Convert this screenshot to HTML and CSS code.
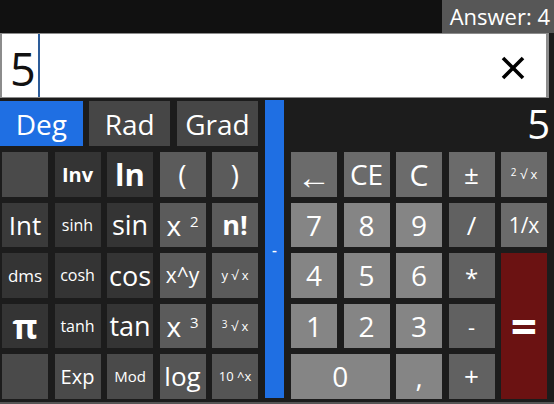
FILE: index.html
```html
<!DOCTYPE html>
<html>
<head>
<meta charset="utf-8">
<link rel="stylesheet" href="styles.css">
</head>
<body>
<div class="app">
  <div class="topbar"><div class="answer">Answer: 4</div></div>
  <div class="input">
    <span class="val">5</span><span class="caret"></span>
    <span class="clear"><svg width="26" height="24" viewBox="0 0 26 24"><path d="M3 2 L23 22 M23 2 L3 22" stroke="#000" stroke-width="3.6" fill="none"/></svg></span>
  </div>
  <div class="main">
    <div class="left">
      <div class="modes">
        <div class="mode active">Deg</div>
        <div class="mode">Rad</div>
        <div class="mode">Grad</div>
      </div>
      <div class="grid">
        <div class="key m"></div>
        <div class="key d b s20">Inv</div>
        <div class="key d b s31">ln</div>
        <div class="key l s28">(</div>
        <div class="key l s28">)</div>

        <div class="key d2 sb s26">Int</div>
        <div class="key d s16">sinh</div>
        <div class="key d sb s27">sin</div>
        <div class="key l sb s28">x<sup class="sup">2</sup></div>
        <div class="key l b s27">n!</div>

        <div class="key d s17">dms</div>
        <div class="key d s16">cosh</div>
        <div class="key d sb s27">cos</div>
        <div class="key l s21">x^y</div>
        <div class="key l s13">y √ x</div>

        <div class="key d b s34">π</div>
        <div class="key d s16">tanh</div>
        <div class="key d sb s27">tan</div>
        <div class="key l sb s28">x<sup class="sup">3</sup></div>
        <div class="key l s13"><sup class="sup2">3</sup>&nbsp;√ x</div>

        <div class="key m"></div>
        <div class="key m s20">Exp</div>
        <div class="key m s15">Mod</div>
        <div class="key l2 sb s26">log</div>
        <div class="key l2 s13">10 ^x</div>
      </div>
    </div>
    <div class="bar">-</div>
    <div class="right">
      <div class="display">5</div>
      <div class="grid">
        <div class="key f s34 arrow">←</div>
        <div class="key f sb s28">CE</div>
        <div class="key f sb s30">C</div>
        <div class="key f s26">±</div>
        <div class="key f s13"><sup class="sup2">2</sup>&nbsp;√ x</div>

        <div class="key n s28">7</div>
        <div class="key n s28">8</div>
        <div class="key n s28">9</div>
        <div class="key o s26">/</div>
        <div class="key f s21">1/x</div>

        <div class="key n s28">4</div>
        <div class="key n s28">5</div>
        <div class="key n s28">6</div>
        <div class="key o s24 up">*</div>
        <div class="key eq">=</div>

        <div class="key n s28">1</div>
        <div class="key n s28">2</div>
        <div class="key n s28">3</div>
        <div class="key o s22">-</div>

        <div class="key n s28 zero">0</div>
        <div class="key n s28">,</div>
        <div class="key o s26">+</div>
      </div>
    </div>
  </div>
  <div class="bottomline"></div>
</div>
</body>
</html>
```

FILE: styles.css
```css
html, body {
  margin: 0;
  padding: 0;
}
body {
  width: 554px;
  height: 404px;
  overflow: hidden;
  background: #1c1c1c;
  font-family: "Open Sans", "Noto Sans", sans-serif;
  color: #fff;
}
.app {
  width: 554px;
  height: 404px;
  display: flex;
  flex-direction: column;
}
.topbar {
  height: 33px;
  background: #111;
  display: flex;
  justify-content: flex-end;
}
.answer {
  width: 112px;
  height: 33px;
  background: #575757;
  font-size: 22px;
  line-height: 33px;
  text-align: right;
  padding-right: 4px;
  box-sizing: border-box;
}
.input {
  width: 549px;
  height: 65px;
  box-sizing: border-box;
  background: #fff;
  border: 2px solid #8c8c8c;
  border-top-width: 1px;
  border-right-width: 3px;
  border-bottom-width: 1px;
  display: flex;
  align-items: center;
}
.val {
  color: #111;
  font-size: 45px;
  line-height: 1;
  margin-left: 8px;
  margin-top: 6px;
}
.caret {
  align-self: stretch;
  width: 2px;
  background: #2d5d9a;
  margin-left: 2px;
}
.clear {
  margin-left: auto;
  margin-right: 20px;
  display: flex;
  margin-top: 4px;
}
.main {
  display: flex;
  height: 300px;
  padding-top: 2px;
}
.left {
  width: 258px;
  display: flex;
  flex-direction: column;
  gap: 6px;
  padding-top: 1px;
}
.modes {
  display: flex;
  gap: 6.5px;
  height: 45px;
}
.mode {
  width: 81.5px;
  background: #464646;
  font-size: 28px;
  display: flex;
  align-items: center;
  justify-content: center;
}
.mode.active {
  width: 83px;
  background: #1f6fe3;
}
.grid {
  display: grid;
  grid-template-columns: repeat(5, 46px);
  grid-template-rows: repeat(5, 44.5px);
  column-gap: 6.5px;
  row-gap: 6px;
}
.left .grid {
  margin-left: 2px;
}
.bar {
  width: 19px;
  height: 298px;
  margin: 0 7px;
  background: #1f6fe3;
  display: flex;
  align-items: center;
  justify-content: center;
  font-size: 15px;
  font-weight: 600;
}
.right {
  width: 257px;
  display: flex;
  flex-direction: column;
  gap: 6px;
  padding-top: 1px;
}
.display {
  height: 45px;
  font-size: 40px;
  line-height: 45px;
  text-align: right;
  margin-right: -2px;
}
.key {
  display: flex;
  align-items: center;
  justify-content: center;
  color: #fff;
  white-space: nowrap;
}
.arrow { padding-top: 4px; box-sizing: border-box; }
.d { background: #343434; }
.d2 { background: #3a3a3a; }
.m { background: #4a4a4a; }
.l { background: #5b5b5b; }
.l2 { background: #555; }
.f { background: #6b6b6b; }
.n { background: #858585; }
.o { background: #616161; }
.eq {
  background: #6b1212;
  grid-column: 5;
  grid-row: 3 / span 3;
  font-size: 46px;
  font-weight: 700;
}
.zero { grid-column: 1 / span 2; }
.b { font-weight: 700; }
.sb { font-weight: 500; }
.s13 { font-size: 13px; }
.s15 { font-size: 15px; }
.s16 { font-size: 16px; }
.s17 { font-size: 17px; }
.s20 { font-size: 20px; }
.s21 { font-size: 21px; }
.s22 { font-size: 22px; }
.s24 { font-size: 24px; }
.s25 { font-size: 25px; }
.s26 { font-size: 26px; }
.s27 { font-size: 27px; }
.s28 { font-size: 28px; }
.s30 { font-size: 30px; }
.s31 { font-size: 31px; }
.s34 { font-size: 34px; }
.sup {
  font-size: 15px;
  font-weight: 500;
  position: relative;
  top: -4px;
  margin-left: 9px;
  vertical-align: top;
}
.sup2 {
  font-size: 10px;
  vertical-align: top;
  position: relative;
  top: -2px;
}
.up { align-items: flex-start; padding-top: 8px; box-sizing: border-box; }
.bottomline {
  height: 2px;
  background: #555;
  margin-top: auto;
}
```
